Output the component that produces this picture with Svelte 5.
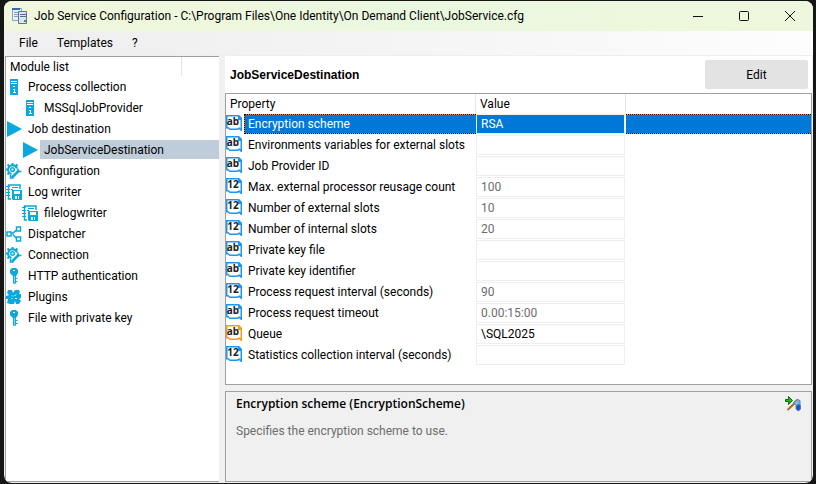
<script lang="ts">
	interface Module {
		label: string;
		icon: string;
		children?: Module[];
	}

	interface Property {
		name: string;
		type: 'ab' | '12';
		value?: string;
		changed?: boolean;
	}

	const menu = ['File', 'Templates', '?'];

	const modules: Module[] = [
		{
			label: 'Process collection',
			icon: 'server',
			children: [{ label: 'MSSqlJobProvider', icon: 'server' }]
		},
		{
			label: 'Job destination',
			icon: 'play',
			children: [{ label: 'JobServiceDestination', icon: 'play' }]
		},
		{ label: 'Configuration', icon: 'gear' },
		{ label: 'Log writer', icon: 'log', children: [{ label: 'filelogwriter', icon: 'log' }] },
		{ label: 'Dispatcher', icon: 'nodes' },
		{ label: 'Connection', icon: 'gear' },
		{ label: 'HTTP authentication', icon: 'key' },
		{ label: 'Plugins', icon: 'plugin' },
		{ label: 'File with private key', icon: 'key' }
	];

	const properties: Property[] = [
		{ name: 'Encryption scheme', type: 'ab', value: 'RSA' },
		{ name: 'Environments variables for external slots', type: 'ab' },
		{ name: 'Job Provider ID', type: 'ab' },
		{ name: 'Max. external processor reusage count', type: '12', value: '100' },
		{ name: 'Number of external slots', type: '12', value: '10' },
		{ name: 'Number of internal slots', type: '12', value: '20' },
		{ name: 'Private key file', type: 'ab' },
		{ name: 'Private key identifier', type: 'ab' },
		{ name: 'Process request interval (seconds)', type: '12', value: '90' },
		{ name: 'Process request timeout', type: 'ab', value: '0.00:15:00' },
		{ name: 'Queue', type: 'ab', value: '\\SQL2025', changed: true },
		{ name: 'Statistics collection interval (seconds)', type: '12' }
	];

	let selectedModule = $state('JobServiceDestination');
	let selectedProperty = $state('Encryption scheme');
</script>

{#snippet moduleIcon(name: string)}
	<svg class="icon" viewBox="0 0 16 16" aria-hidden="true">
		{#if name === 'server'}
			<path fill="#0aa8dc" d="M4 0h8v16H4z" />
			<path stroke="#fff" d="M5 2.5h6M5 4.5h6M7 7.5h2M7 10.5h2M8.5 10v4M7 13.5h3" />
		{:else if name === 'play'}
			<path fill="#0aa8dc" d="M1 0l15 8-15 8z" />
		{:else if name === 'gear'}
			<path fill="none" stroke="#0aa8dc" stroke-width="2" d="M11 5.5A4.500 4.500 0 1 0 5.500 11" />
			<circle cx="6.500" cy="6.500" r="1.800" fill="none" stroke="#0aa8dc" stroke-width="1.500" />
			<path
				stroke="#0aa8dc"
				stroke-width="2"
				d="M6.500 0v2M0 6.500h2M1.500 1.500l2 2M11.500 1.500l-2 2M1.500 11.500l2-2"
			/>
			<path stroke="#0aa8dc" stroke-width="2.500" d="M6 14.500l7-7" />
			<path fill="none" stroke="#0aa8dc" stroke-width="1.500" d="M12 5.500V8.500h3.500M4.500 12v3h3" />
		{:else if name === 'log'}
			<path fill="none" stroke="#0aa8dc" stroke-width="1.500" d="M5 15H2.500V1h11.500v4" />
			<path stroke="#0aa8dc" d="M0 2.500h4M0 5.500h4M0 8.500h4M0 11.500h4M6 3.500h6M5 5.500h2" />
			<path fill="#0aa8dc" d="M6 6h10v10H7l-1-1z" />
			<path fill="#fff" d="M8 7h6v3H8zM9 12h4v3H9z" />
			<path fill="#0aa8dc" d="M11 12h1v3h-1z" />
		{:else if name === 'nodes'}
			<path
				fill="none"
				stroke="#0aa8dc"
				stroke-width="1.500"
				d="M1 6h4v4H1zM10.500 1h4v4h-4zM10.500 11h4v4h-4zM5 8l2-1 3.500-3M7 8.500l3.500 4"
			/>
		{:else if name === 'key'}
			<path fill="#0aa8dc" d="M6 0h4l2 2v3l-2 3v7l-1 1H8l-1-1V8L4 5V2z" />
			<path stroke="#fff" d="M7 2.500h2" />
			<path stroke="#8fd7ef" d="M8.500 8v7" />
			<path stroke="#0aa8dc" d="M10 10.500h1.500M10 13.500h1.500" />
		{:else}
			<path
				fill="#0aa8dc"
				d="M2 1h4l1 3 2-3h4l1 2-1 2h2v4l-2 1 2 2-2 3h-3l-1-3-1 3H4l-3-1 1-4H0V7l3-1-2-2z"
			/>
			<path stroke="#fff" d="M6 6.500l1 1M10 5.500L8.500 7M5.500 10l1-1M9 9.500h2" />
		{/if}
	</svg>
{/snippet}

{#snippet moduleList(items: Module[])}
	<ul>
		{#each items as item (item.label)}
			<li>
				<button
					class="module"
					class:selected={item.label === selectedModule}
					onclick={() => (selectedModule = item.label)}
				>
					{@render moduleIcon(item.icon)}
					<span>{item.label}</span>
				</button>
				{#if item.children}
					{@render moduleList(item.children)}
				{/if}
			</li>
		{/each}
	</ul>
{/snippet}

<div class="window">
	<header class="titlebar">
		<svg class="icon" viewBox="0 0 16 16" aria-hidden="true">
			<path fill="#e8eef8" stroke="#8fa3c4" d="M.5.500h9v12h-9z" />
			<path stroke="#3468c0" stroke-width="2" d="M0 1h8" />
			<path stroke="#86a0ca" d="M2 4.500h4M2 6.500h4M2 8.500h4" />
			<path fill="#dce5f1" stroke="#60738f" d="M6.500 3.500h8v12h-8z" />
			<path stroke="#4e6b99" d="M8 6.500h6M8 8.500h6" />
			<path fill="#2ea34a" d="M12 12h2v2h-2z" />
		</svg>
		<h1>Job Service Configuration - C:\Program Files\One Identity\On Demand Client\JobService.cfg</h1>
		<div class="controls">
			<button aria-label="Minimize">
				<svg viewBox="0 0 12 12"><path d="M1 6.500h10" /></svg>
			</button>
			<button aria-label="Maximize">
				<svg viewBox="0 0 12 12"><rect x="1.500" y="1.500" width="9" height="9" rx="1" /></svg>
			</button>
			<button aria-label="Close">
				<svg viewBox="0 0 12 12"><path d="M1 1l10 10M11 1L1 11" /></svg>
			</button>
		</div>
	</header>

	<nav class="menu">
		{#each menu as entry (entry)}
			<button>{entry}</button>
		{/each}
	</nav>

	<main>
		<aside class="tree">
			<h2>Module list</h2>
			{@render moduleList(modules)}
		</aside>

		<section class="detail">
			<div class="detail-header">
				<h2>{selectedModule}</h2>
				<button class="edit">Edit</button>
			</div>

			<div class="grid">
				<table>
					<colgroup>
						<col class="col-type" />
						<col class="col-name" />
						<col class="col-value" />
						<col />
					</colgroup>
					<thead>
						<tr>
							<th colspan="2">Property</th>
							<th>Value</th>
							<th></th>
						</tr>
					</thead>
					<tbody>
						{#each properties as property, i (property.name)}
							<tr
								class:selected={property.name === selectedProperty}
								onclick={() => (selectedProperty = property.name)}
							>
								<td class="type">
									<svg class="icon" class:changed={property.changed} viewBox="0 0 16 16" aria-hidden="true">
										<path class="frame" d="M.75.750h11.500l3 3v11.500l-2-2-2 1H4l-2-1.500H.750z" />
										<path class="fold" d="M12 0h1l3 3v2h-4z" />
										<text x="7" y="10">{property.type}</text>
									</svg>
								</td>
								<td class="name" id="property-{i}"><div>{property.name}</div></td>
								<td class="value">
									<input
										class:changed={property.changed}
										aria-labelledby="property-{i}"
										value={property.value ?? ''}
										readonly
									/>
								</td>
								<td class="rest"><div></div></td>
							</tr>
						{/each}
					</tbody>
				</table>
			</div>

			<div class="info">
				<div>
					<h3>Encryption scheme (EncryptionScheme)</h3>
					<p>Specifies the encryption scheme to use.</p>
				</div>
				<button aria-label="Tools">
					<svg class="icon" viewBox="0 0 16 16">
						<path stroke="#b56a13" stroke-width="2" d="M2.500 14L12 5" />
						<path fill="#7fb8e8" stroke="#4a86bd" d="M8 7l4-3.500 3 1V10h-3z" />
						<path stroke="#b56a13" d="M9 6l4-3" />
						<path fill="#1557cf" stroke="#5a7ba6" d="M11 10l3-2 1.500 2v3l-2 2-2.500-2z" />
						<path fill="#24b51c" stroke="#086c16" d="M.5 3.500h3v-3L7.500 4.500l-4 4v-3h-3z" />
					</svg>
				</button>
			</div>
		</section>
	</main>
</div>

<style>
	:global(body) {
		background: #161616;
	}

	:global(#app) {
		min-height: 100vh;
		display: flex;
		box-sizing: border-box;
		padding: 1px 3px 1px 4px;
	}

	.window {
		flex: 1;
		min-width: 0;
		display: flex;
		flex-direction: column;
		overflow: hidden;
		border-radius: 8px;
		background: #f0f0f0;
		color: #000;
		font: 12px/16px Roboto, 'Open Sans', sans-serif;
	}

	h1,
	h2,
	h3,
	p,
	ul {
		margin: 0;
		padding: 0;
		font-size: inherit;
		font-weight: normal;
	}

	button {
		border: 0;
		padding: 0;
		background: none;
		color: inherit;
		font: inherit;
	}

	.icon {
		display: block;
		flex: none;
		width: 16px;
		height: 16px;
	}

	.titlebar {
		display: flex;
		align-items: center;
		height: 30px;
		padding-left: 8px;
		gap: 6px;
		background: linear-gradient(90deg, #f0f7dc, #eaf8df 50%, #eef7dd);
	}

	.titlebar h1 {
		flex: 1;
		white-space: nowrap;
	}

	.controls {
		display: flex;
	}

	.controls button {
		width: 46px;
		height: 30px;
		display: grid;
		place-items: center;
	}

	.controls svg {
		width: 12px;
		height: 12px;
		fill: none;
		stroke: #111;
	}

	.menu {
		display: flex;
		align-items: center;
		gap: 19px;
		height: 24px;
		padding-left: 15px;
		border-bottom: 1px solid #eee;
		background: linear-gradient(90deg, #f0f0f0 20%, #fdfdfd);
	}

	main {
		flex: 1;
		display: grid;
		grid-template-columns: 214px minmax(0, 1fr);
		gap: 6px;
		padding: 0 1px;
	}

	.tree {
		margin-bottom: 1px;
		border: 1px solid #a0a0a0;
		border-right: 0;
		background: #fff;
	}

	.tree h2 {
		width: 171px;
		height: 19px;
		padding-left: 4px;
		border-right: 1px solid #e5e5e5;
		line-height: 20px;
	}

	.tree ul {
		list-style: none;
	}

	.tree ul ul {
		padding-left: 16px;
	}

	.module {
		display: flex;
		align-items: center;
		gap: 2px;
		width: 100%;
		height: 21px;
		text-align: left;
	}

	.module span {
		flex: 1;
		height: 19px;
		padding-left: 4px;
		line-height: 21px;
	}

	.module.selected span {
		background: #bfcddb;
	}

	.detail {
		display: flex;
		flex-direction: column;
	}

	.detail-header {
		display: flex;
		align-items: center;
		justify-content: space-between;
		height: 37px;
		padding: 0 4px 0 5px;
		background: #fff;
	}

	.detail-header h2 {
		font: bold 12px/18px 'Liberation Sans', sans-serif;
	}

	.edit {
		width: 103px;
		height: 29px;
		border-radius: 2px;
		background: #e3e3e3;
	}

	.grid {
		flex: 1;
		margin-bottom: 6px;
		border: 1px solid #a0a0a0;
		background: #fff;
	}

	table {
		width: 100%;
		border-spacing: 0;
		table-layout: fixed;
	}

	.col-type {
		width: 18px;
	}

	.col-name {
		width: 232px;
	}

	.col-value {
		width: 150px;
	}

	th,
	td {
		padding: 0;
		text-align: left;
		font-weight: normal;
	}

	th {
		height: 20px;
		padding-left: 4px;
		border-right: 1px solid #e5e5e5;
		line-height: 18px;
	}

	th:last-child {
		border-right: 0;
	}

	td {
		height: 21px;
		vertical-align: top;
	}

	.type .icon {
		padding-top: 1px;
		color: #1e96f0;
	}

	.type .icon.changed {
		color: #f59a13;
	}

	.frame {
		fill: #fff;
		stroke: currentColor;
		stroke-width: 1.5;
	}

	.fold {
		fill: currentColor;
	}

	.icon text {
		fill: #222;
		font: bold 10px 'Noto Sans', sans-serif;
		text-anchor: middle;
	}

	.name div {
		height: 18px;
		padding-left: 3px;
		border: 1px solid transparent;
		line-height: 18px;
		white-space: nowrap;
	}

	.rest div {
		height: 18px;
		border: 1px solid transparent;
	}

	.selected .name div,
	.selected .rest div {
		border: 1px dotted #000;
		border-right: 0;
		background:
			linear-gradient(#0078d7, #0078d7) padding-box,
			linear-gradient(#ff8728, #ff8728) border-box;
		color: #fff;
	}

	.selected .rest div {
		border-left: 0;
	}

	.value input {
		display: block;
		box-sizing: border-box;
		width: 149px;
		height: 20px;
		padding: 0 4px;
		border: 1px solid #eee;
		background: #fff;
		color: #6d6d6d;
		font: inherit;
		outline: 0;
	}

	.value input.changed {
		color: #000;
	}

	.selected .value input {
		background: #0078d7;
		color: #fff;
	}

	.info {
		display: flex;
		justify-content: space-between;
		align-items: flex-start;
		height: 91px;
		box-sizing: border-box;
		margin-bottom: 1px;
		padding: 4px 10px;
		border: 1px solid #a0a0a0;
		background: #f0f0f0;
	}

	.info h3 {
		font-family: 'Open Sans', sans-serif;
		font-weight: 600;
	}

	.info p {
		margin-top: 11px;
		color: #6d6d6d;
	}
</style>
